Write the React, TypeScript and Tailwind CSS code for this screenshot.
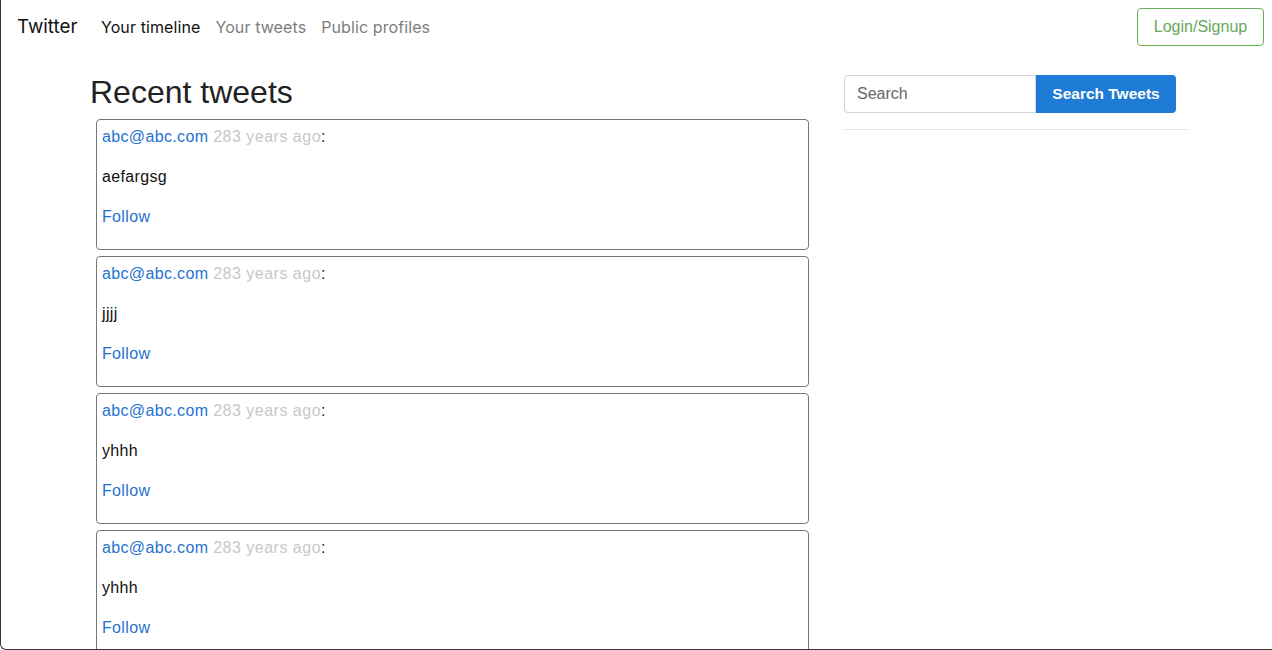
import React from "react";

const tweets = ["aefargsg", "jjjj", "yhhh", "yhhh"];

export default function App() {
  return (
    <div
      className="h-[650px] w-[1272px] overflow-hidden bg-white border-l border-b border-[#3a3a3a] rounded-bl-[6px] text-[#212529]"
      style={{ fontFamily: '"Liberation Sans", Arial, sans-serif' }}
    >
      <nav className="h-[54px] flex items-center pl-[16px] pr-[8px]">
        <span className="text-[18.75px] text-[#111] mr-[16px]" style={{ fontFamily: 'Inter, "Liberation Sans", sans-serif' }}>Twitter</span>
        <div className="flex text-[16px] tracking-[0.1px]" style={{ fontFamily: 'Inter, "Liberation Sans", sans-serif' }}>
          <span className="px-[7.5px] text-[#111]">Your timeline</span>
          <span className="px-[7.5px] text-[#7d7d7d]">Your tweets</span>
          <span className="px-[7.5px] text-[#7d7d7d]">Public profiles</span>
        </div>
        <div className="ml-auto">
          <button className="h-[38px] w-[127px] border border-[#6aae5c] rounded-[4px] text-[16px] text-[#68a85b] -mt-[1px]">
            Login/Signup
          </button>
        </div>
      </nav>
      <main className="flex pl-[89px] pt-[19px]">
        <div className="w-[719px]">
          <h2 className="text-[32px] leading-[38px] font-medium text-[#222] mb-[8px]">Recent tweets</h2>
          <div className="flex flex-col gap-[6px] pl-[6px]">
            {tweets.map((t, i) => (
              <div key={i} className="border border-[#777] rounded-[4px] px-[5px] pt-[5px] pb-[4px] text-[16px] leading-[24px] tracking-[0.35px]">
                <p className="mb-[16px]">
                  <span className="text-[#1f73d0]">abc@abc.com</span>{" "}
                  <span className="text-[#c8c8c8] tracking-[0.5px]">283 years ago</span>:
                </p>
                <p className="mb-[16px] text-[#111]">{t}</p>
                <p className="mb-[16px] text-[#1f73d0]">Follow</p>
              </div>
            ))}
          </div>
        </div>
        <div className="ml-[35px] w-[345px] pt-[2px]">
          <div className="flex">
            <input
              className="h-[38px] w-[192px] border border-[#ced4da] rounded-l-[4px] px-[12px] text-[16px] text-[#495057] placeholder:text-[#666] outline-none"
              placeholder="Search"
              style={{ fontFamily: '"Liberation Sans", Arial, sans-serif' }}
            />
            <button className="h-[38px] w-[140px] bg-[#1e7bd6] rounded-r-[4px] text-white text-[15.5px] font-bold">
              Search Tweets
            </button>
          </div>
          <hr className="mt-[16px] border-t border-[#e6e6e6]" />
        </div>
      </main>
    </div>
  );
}
